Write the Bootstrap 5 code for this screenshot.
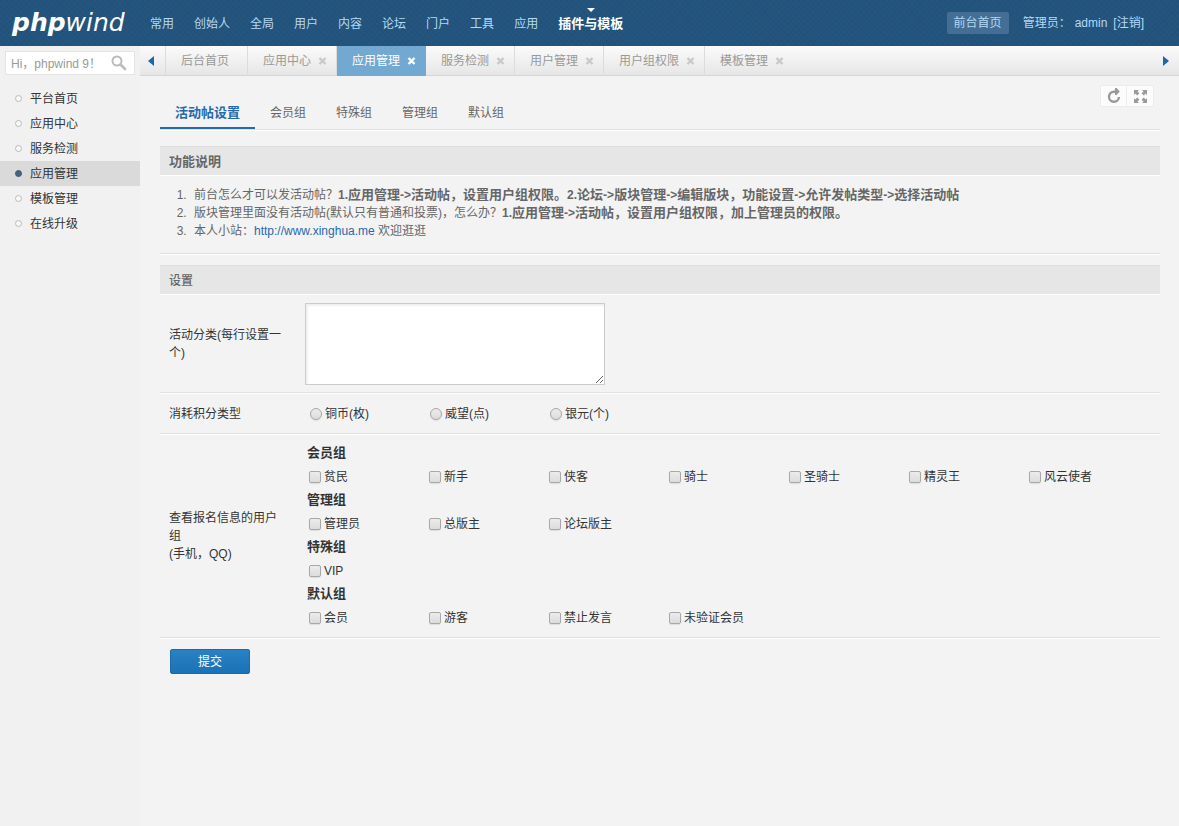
<!DOCTYPE html>
<html lang="zh-CN">
<head>
<meta charset="utf-8">
<meta name="viewport" content="width=device-width, initial-scale=1">
<title>phpwind</title>
<link href="https://cdn.jsdelivr.net/npm/bootstrap@5.3.0/dist/css/bootstrap.min.css" rel="stylesheet">
<style>
  body { font: 12px/18px "Liberation Sans", "Noto Sans CJK SC", sans-serif; color: #333; background: #f3f3f3; }
  a { text-decoration: none; color: #266aae; }
  b, strong, .bold-text { font-size: 13px; font-weight: 700; }
  .lat { font-size: 12px; }

  /* top bar */
  .topbar { height: 46px; background-color: #24557f;
    background-image: repeating-linear-gradient(45deg, rgba(0,0,0,.04) 0 1px, transparent 1px 4px), repeating-linear-gradient(-45deg, rgba(0,0,0,.04) 0 1px, transparent 1px 4px); }
  .topbar a, .topbar { color: #b4d9f5; }
  .brand-col { width: 140px; }
  .topbar .logo { font: italic 400 25px/42px "DejaVu Sans", sans-serif; color: #fff; padding-left: 12px; display: block; }
  .logo b { font-size: 25px; }
  .mainnav a { display: block; padding: 0 10px; line-height: 48px; height: 46px; }
  .topbar .mainnav .active { color: #fff; position: relative; }
  .mainnav .active::before { content: ""; position: absolute; left: 50%; margin-left: -4px; top: 8px; border: 4px solid transparent; border-top-color: #fff; border-bottom: 0; }
  .topbar .front { background: #456e94; border-radius: 2px; line-height: 22px; padding: 0 7px; margin-right: 14px; }
  .userbox { padding-right: 35px; }
  .userbox .admin { margin: 0 6px 0 4px; }

  /* sidebar */
  .sidebar { width: 140px; background: #f1f1f1; min-height: calc(100vh - 46px); }
  .searchbox { margin: 5px 5px 11px; height: 24px; background: #fff; border: 1px solid #e4e4e4; }
  .searchbox input { border: 0; padding: 1px 0 0 5px; min-width: 0; background: none; outline: 0; }
  .searchbox input::placeholder { color: #999; opacity: 1; }
  .searchbox button { border: 0; background: none; padding: 0 7px 0 0; line-height: 0; }
  .sidemenu a { display: flex; align-items: center; height: 25px; padding-left: 15px; color: #333; }
  .sidemenu a::before { content: ""; width: 7px; height: 7px; margin-right: 8px; border: 1px solid #bbb; border-radius: 50%; background: #f8f8f8; }
  .sidemenu .active { background: #dadada; }
  .sidemenu .active::before { background: #466480; border-color: #3d5a75; }

  /* tab strip */
  .tabstrip { height: 30px; background: linear-gradient(#fbfbfb, #e6e6e6); border-bottom: 1px solid #d5d5d5; }
  .tabstrip .arrow { width: 26px; height: 29px; border: 0; background: none; padding: 0; line-height: 0; }
  .tabstrip .arrow:first-child { border-right: 1px solid #dcdcdc; padding-right: 4px; }
  .pagetab { height: 30px; border-right: 1px solid #dcdcdc; padding: 0 9px 0 15px; }
  .pagetab:first-child { padding-right: 18px; }
  .pagetab:last-child { border: 0; }
  .pagetab a { color: #999; line-height: 30px; }
  .pagetab button { border: 0; background: none; padding: 0; margin-left: 7px; color: #c9c9c9; line-height: 0; }
  .pagetab.active { background: #73a8d1; border-color: #73a8d1; }
  .pagetab.active a, .pagetab.active button { color: #fff; }

  /* content */
  .content { padding: 9px 19px 0 20px; }
  .subnav { border-bottom: 1px solid #e1e1e1; box-shadow: 0 1px #fff; margin-bottom: 16px; }
  .subnav nav { padding-top: 9px; }
  .subnav a { display: block; padding: 10px 15px 5px; line-height: 18px; height: 35px; color: #666; }
  .subnav .active { color: #266aae; border-bottom: 2px solid #266aae; }
  .tools { margin-right: 6px; }
  .tools button { width: 27px; height: 22px; padding: 0; border: 1px solid #ececec; background: #fcfcfc; line-height: 0; color: #999; }
  .tools button + button { border-left: 0; }
  .sec-title { font-size: 12px; line-height: 18px; height: 29px; margin: 0 0 1px; padding: 6px 9px; color: #666; background: #e6e6e6; border-top: 1px solid #ddd; box-shadow: 0 1px #fff; }
  .sec-title.bold-text { font-size: 13px; }
  .tips { color: #666; padding: 10px 0 13px 30px; margin: 0 0 11px; border-bottom: 1px solid #e1e1e1; box-shadow: 0 1px #fff; }
  .tips li { padding-left: 4px; }
  .formtable { width: 100%; border-collapse: separate; border-spacing: 0; }
  .formtable th, .formtable td { border-bottom: 1px solid #e1e1e1; box-shadow: 0 1px #fff; vertical-align: middle; padding: 8px 0 7px; }
  .formtable th { width: 145px; font-weight: 400; padding: 8px 20px 7px 9px; }
  .formtable textarea { display: block; width: 300px; height: 82px; border: 1px solid #ccc; background: #fff; box-shadow: inset 2px 2px 2px #f0f0f0; }
  .opts { display: grid; grid-template-columns: repeat(auto-fill, 120px); padding-left: 4px; }
  .opts label { display: flex; align-items: center; height: 25px; white-space: nowrap; }
  .opts input { appearance: none; width: 12px; height: 12px; margin: 0 3px 0 0; border: 1px solid #a8a8a8; border-radius: 2px; background: linear-gradient(#ececec, #dcdcdc); box-shadow: 0 1px 1px #ddd; }
  .opts input[type=radio] { border-radius: 50%; }
  .opts input:checked { background: #266aae; }
  .opts.radios { padding-left: 5px; }
  .grp { border: 0; padding: 0; margin: 0; min-width: 0; }
  .grp legend { font-size: 13px; font-weight: 700; line-height: 22px; margin: 0; padding-left: 2px; float: none; }
  .submit { width: 80px; height: 25px; line-height: 23px; margin: 11px 0 20px 10px; padding: 1px 0 0; color: #fff; font-size: 12px; border: 1px solid #1b6aab; border-radius: 2px; background: linear-gradient(#2981c6, #1b72b4); }
</style>
</head>
<body>
<header class="topbar d-flex align-items-center">
  <div class="brand-col flex-shrink-0"><a class="logo" href="#"><b>php</b>wind</a></div>
  <nav class="mainnav d-flex flex-grow-1 text-nowrap">
    <a href="#">常用</a><a href="#">创始人</a><a href="#">全局</a><a href="#">用户</a><a href="#">内容</a><a href="#">论坛</a><a href="#">门户</a><a href="#">工具</a><a href="#">应用</a><a href="#" class="active bold-text">插件与模板</a>
  </nav>
  <div class="userbox d-flex align-items-center text-nowrap">
    <a class="front" href="#">前台首页</a><span>管理员：</span><a class="admin" href="#">admin</a><a href="#">[注销]</a>
  </div>
</header>

<div class="d-flex">
  <aside class="sidebar flex-shrink-0">
    <form class="searchbox d-flex align-items-center">
      <input type="text" class="flex-grow-1" placeholder="Hi，phpwind 9！" aria-label="搜索">
      <button type="button" aria-label="搜索"><svg width="16" height="16" viewBox="0 0 16 16" fill="none" stroke="#bbb"><circle cx="6" cy="6" r="4.5" stroke-width="2"/><path d="M9.5 9.5 14 14" stroke-width="2.6" stroke-linecap="round"/></svg></button>
    </form>
    <nav class="sidemenu">
      <a href="#">平台首页</a><a href="#">应用中心</a><a href="#">服务检测</a><a href="#" class="active">应用管理</a><a href="#">模板管理</a><a href="#">在线升级</a>
    </nav>
  </aside>

  <div class="flex-grow-1">
    <svg class="d-none"><symbol id="x" viewBox="0 0 8 8"><path d="M1 1 7 7M7 1 1 7" stroke="currentColor" stroke-width="2.4"/></symbol></svg>
    <div class="tabstrip d-flex text-nowrap">
      <button class="arrow" type="button" aria-label="向左"><svg width="6" height="10" viewBox="0 0 6 10"><path d="M6 0v10L0 5z" fill="#1a66b0"/></svg></button>
      <div class="d-flex flex-grow-1">
        <div class="pagetab"><a href="#">后台首页</a></div>
        <div class="pagetab d-flex align-items-center"><a href="#">应用中心</a><button type="button" aria-label="关闭"><svg width="9" height="8"><use href="#x"/></svg></button></div>
        <div class="pagetab active d-flex align-items-center"><a href="#">应用管理</a><button type="button" aria-label="关闭"><svg width="9" height="8"><use href="#x"/></svg></button></div>
        <div class="pagetab d-flex align-items-center"><a href="#">服务检测</a><button type="button" aria-label="关闭"><svg width="9" height="8"><use href="#x"/></svg></button></div>
        <div class="pagetab d-flex align-items-center"><a href="#">用户管理</a><button type="button" aria-label="关闭"><svg width="9" height="8"><use href="#x"/></svg></button></div>
        <div class="pagetab d-flex align-items-center"><a href="#">用户组权限</a><button type="button" aria-label="关闭"><svg width="9" height="8"><use href="#x"/></svg></button></div>
        <div class="pagetab d-flex align-items-center"><a href="#">模板管理</a><button type="button" aria-label="关闭"><svg width="9" height="8"><use href="#x"/></svg></button></div>
      </div>
      <button class="arrow" type="button" aria-label="向右"><svg width="6" height="10" viewBox="0 0 6 10"><path d="M0 0v10L6 5z" fill="#1a66b0"/></svg></button>
    </div>

    <main class="content">
      <div class="subnav d-flex align-items-start justify-content-between">
        <nav class="d-flex text-nowrap">
          <a href="#" class="active bold-text">活动帖设置</a><a href="#">会员组</a><a href="#">特殊组</a><a href="#">管理组</a><a href="#">默认组</a>
        </nav>
        <div class="tools d-flex">
          <button type="button" aria-label="刷新"><svg width="14" height="16" viewBox="0 0 14 16"><path d="M8.500 3.700H7A5 5 0 1 0 12 9" fill="none" stroke="currentColor" stroke-width="2.4"/><path d="M8 0h1.500L12.800 3.600 9.500 7H8z" fill="currentColor"/></svg></button>
          <button type="button" aria-label="全屏"><svg width="13" height="13" viewBox="0 0 12 12" fill="currentColor"><path d="M0 0h4.500L3.200 1.300 5 3 3 5 1.300 3.200 0 4.500zM12 0v4.500L10.700 3.200 9 5 7 3l1.800-1.700L7.500 0zM0 12V7.500l1.300 1.300L3 7l2 2-1.800 1.700L4.500 12zM12 12H7.500l1.300-1.300L7 9l2-2 1.700 1.800L12 7.500z"/></svg></button>
        </div>
      </div>

      <h2 class="sec-title bold-text">功能说明</h2>
      <ol class="tips">
        <li>前台怎么才可以发活动帖？<b><span class="lat">1.</span>应用管理<span class="lat">-&gt;</span>活动帖，设置用户组权限。<span class="lat">2.</span>论坛<span class="lat">-&gt;</span>版块管理<span class="lat">-&gt;</span>编辑版块，功能设置<span class="lat">-&gt;</span>允许发帖类型<span class="lat">-&gt;</span>选择活动帖</b></li>
        <li>版块管理里面没有活动帖(默认只有普通和投票)，怎么办？<b><span class="lat">1.</span>应用管理<span class="lat">-&gt;</span>活动帖，设置用户组权限，加上管理员的权限。</b></li>
        <li>本人小站：<a href="#">http://www.xinghua.me</a> 欢迎逛逛</li>
      </ol>

      <h2 class="sec-title">设置</h2>
      <form>
        <table class="formtable">
          <tr>
            <th scope="row"><label for="kinds">活动分类(每行设置一个)</label></th>
            <td><textarea id="kinds"></textarea></td>
          </tr>
          <tr>
            <th scope="row">消耗积分类型</th>
            <td><div class="opts radios">
              <label><input type="radio" name="credit">铜币(枚)</label><label><input type="radio" name="credit">威望(点)</label><label><input type="radio" name="credit">银元(个)</label>
            </div></td>
          </tr>
          <tr>
            <th scope="row">查看报名信息的用户组<br>(手机，QQ)</th>
            <td>
              <fieldset class="grp"><legend>会员组</legend><div class="opts">
                <label><input type="checkbox">贫民</label><label><input type="checkbox">新手</label><label><input type="checkbox">侠客</label><label><input type="checkbox">骑士</label><label><input type="checkbox">圣骑士</label><label><input type="checkbox">精灵王</label><label><input type="checkbox">风云使者</label>
              </div></fieldset>
              <fieldset class="grp"><legend>管理组</legend><div class="opts">
                <label><input type="checkbox">管理员</label><label><input type="checkbox">总版主</label><label><input type="checkbox">论坛版主</label>
              </div></fieldset>
              <fieldset class="grp"><legend>特殊组</legend><div class="opts">
                <label><input type="checkbox">VIP</label>
              </div></fieldset>
              <fieldset class="grp"><legend>默认组</legend><div class="opts">
                <label><input type="checkbox">会员</label><label><input type="checkbox">游客</label><label><input type="checkbox">禁止发言</label><label><input type="checkbox">未验证会员</label>
              </div></fieldset>
            </td>
          </tr>
        </table>
        <button class="submit" type="button">提交</button>
      </form>
    </main>
  </div>
</div>
<script src="https://cdn.jsdelivr.net/npm/bootstrap@5.3.0/dist/js/bootstrap.bundle.min.js"></script>
</body>
</html>
